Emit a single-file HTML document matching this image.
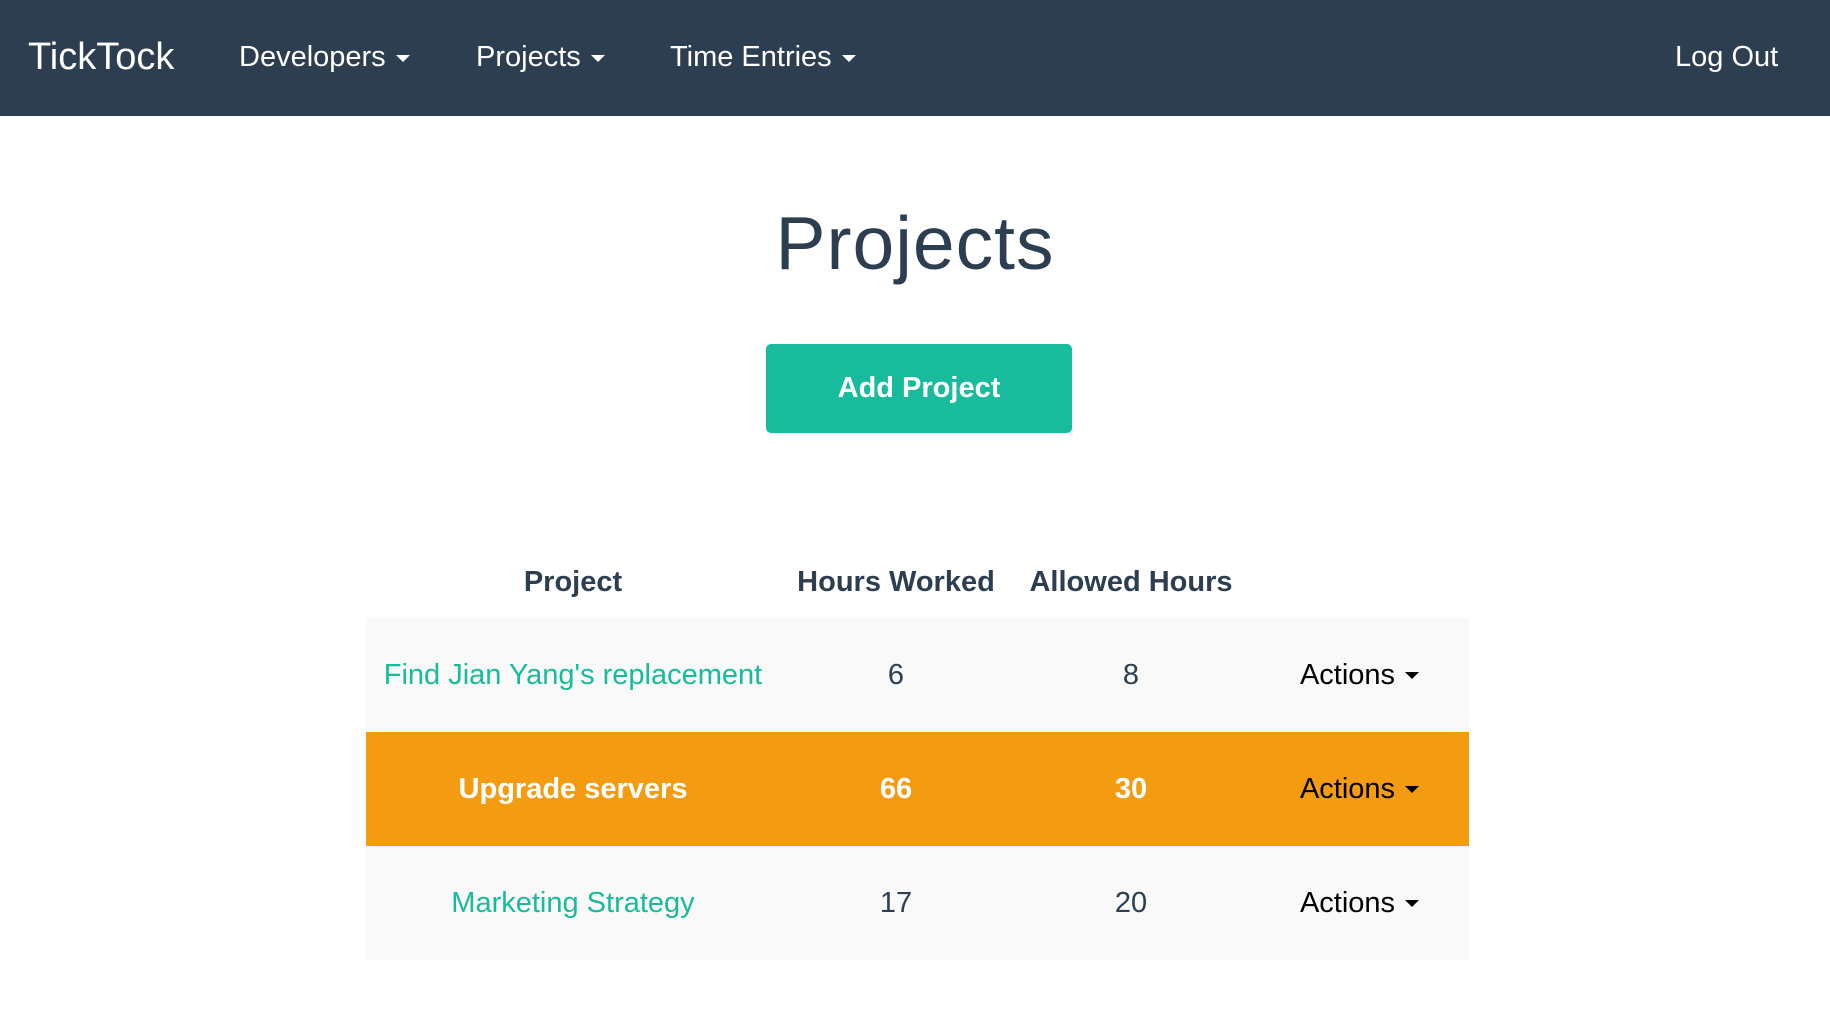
<!DOCTYPE html>
<html><head><meta charset="utf-8"><style>
body{margin:0;width:1830px;height:1034px;background:#fff;font-family:"Liberation Sans",sans-serif;color:#2c3e50;overflow:hidden}
.nav{position:absolute;left:0;top:0;width:1830px;height:116px;background:#2c3e50;color:#fff}
.nav span{position:absolute;top:0;line-height:114px;font-size:29px;white-space:nowrap}
.car{display:inline-block;width:0;height:0;border-left:7px solid transparent;border-right:7px solid transparent;border-top:7px solid currentColor;vertical-align:middle;margin-left:10px}
h1{position:absolute;left:0;width:1830px;top:193px;margin:0;text-align:center;font-weight:normal;font-size:75px;line-height:100px;letter-spacing:1px}
.btn{position:absolute;left:766px;top:344px;width:306px;height:89px;background:#18bc9c;border-radius:5px;color:#fff;font-weight:bold;font-size:29px;line-height:89px;text-align:center}
table{position:absolute;left:366px;top:546px;width:1103px;border-collapse:collapse;font-size:29px}
td,th{text-align:center;padding:0}
th{height:72px;font-weight:bold}
td{height:114px;background:#f9f9f9}
tr.w td{background:#f39c12;color:#fff;font-weight:bold}
.l{color:#18bc9c}
td.a,tr.w td.a{color:#000;font-weight:normal}
</style></head><body>
<div class="nav">
<span style="left:28px;font-size:38px">TickTock</span>
<span style="left:239px">Developers<i class="car"></i></span>
<span style="left:476px">Projects<i class="car"></i></span>
<span style="left:670px">Time Entries<i class="car"></i></span>
<span style="left:1675px">Log Out</span>
</div>
<h1>Projects</h1>
<div class="btn">Add Project</div>
<table>
<colgroup><col style="width:414px"><col style="width:232px"><col style="width:238px"><col style="width:219px"></colgroup>
<tr><th>Project</th><th>Hours Worked</th><th>Allowed Hours</th><th></th></tr>
<tr><td class="l">Find Jian Yang's replacement</td><td>6</td><td>8</td><td class="a">Actions<i class="car"></i></td></tr>
<tr class="w"><td>Upgrade servers</td><td>66</td><td>30</td><td class="a">Actions<i class="car"></i></td></tr>
<tr><td class="l">Marketing Strategy</td><td>17</td><td>20</td><td class="a">Actions<i class="car"></i></td></tr>
</table>
</body></html>
